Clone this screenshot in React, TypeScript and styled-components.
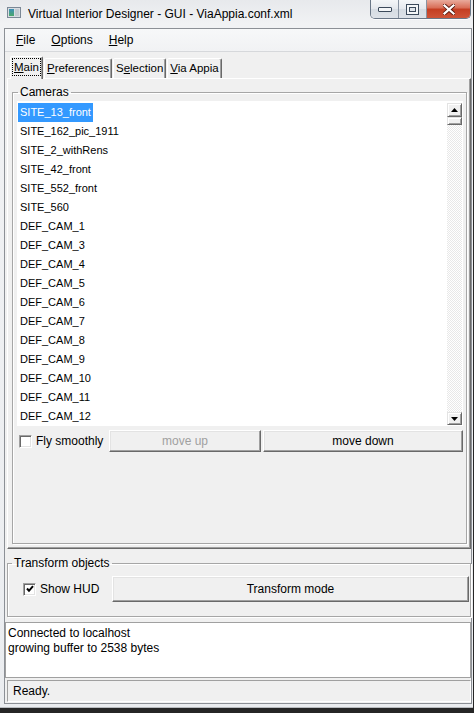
import React from "react";
import styled, { createGlobalStyle } from "styled-components";

const Global = createGlobalStyle`
  html, body { margin: 0; padding: 0; background: #262626; }
  body { width: 474px; height: 713px; overflow: hidden; font-family: "Liberation Sans", Arial, sans-serif; }
  #root { width: 474px; height: 713px; }
  * { box-sizing: border-box; }
`;

const Window = styled.div`
  width: 473px;
  height: 708px;
  display: flex;
  flex-direction: column;
  background: linear-gradient(180deg, #e7e9ec 0px, #f1f2f4 24px, #ebedf0 100%);
  border-bottom: 1px solid #b9bcc0;
`;

const TitleBar = styled.div`
  height: 28px;
  flex: none;
  display: flex;
  align-items: flex-start;
`;

const AppIcon = styled.svg`
  margin: 7px 0 0 7px;
  flex: none;
`;

const TitleText = styled.div`
  margin: 7px 0 0 7px;
  font-size: 12px;
  line-height: 15px;
  color: #000;
  white-space: nowrap;
`;

const Caption = styled.div`
  margin-left: auto;
  margin-right: 2px;
  display: flex;
  height: 19px;
  border: 1px solid #6a7787;
  border-top: none;
  border-radius: 0 0 5px 5px;
  overflow: hidden;
  box-shadow: 0 1px 0 rgba(255, 255, 255, 0.8);
`;

const CapBtn = styled.div`
  width: 28px;
  height: 100%;
  display: flex;
  align-items: center;
  justify-content: center;
  background: linear-gradient(180deg, #f4f6f8 0%, #e4e8ed 50%, #d6dce3 51%, #dde2e8 100%);
  border-right: 1px solid #8893a1;
`;

const CloseBtn = styled.div`
  width: 43px;
  height: 100%;
  display: flex;
  align-items: center;
  justify-content: center;
  background: linear-gradient(180deg, #e9ab9c 0%, #d86c55 45%, #c43e22 50%, #cf5438 100%);
`;

const Client = styled.div`
  flex: 1;
  margin: 0 1px 3px 4px;
  border: 1px solid #8c9096;
  background: #f0f0f0;
  display: flex;
  flex-direction: column;
  font-size: 12px;
  color: #000;
`;

const MenuBar = styled.div`
  height: 23px;
  flex: none;
  display: flex;
  align-items: center;
  padding-left: 3px;
  background: linear-gradient(180deg, #f7f8f9, #f1f2f4);
  border-bottom: 1px solid #d6d8db;
`;

const MenuItem = styled.span`
  padding: 0 8px;
  font-size: 12px;
  line-height: 15px;
`;

const Central = styled.div`
  flex: 1;
  display: flex;
  flex-direction: column;
  padding: 4px 0 0 2px;
`;

const TabWidget = styled.div`
  flex: 1;
  display: flex;
  flex-direction: column;
`;

const TabBar = styled.div`
  height: 22px;
  flex: none;
  display: flex;
  align-items: flex-end;
  gap: 1px;
  padding-left: 3px;
  position: relative;
  z-index: 1;
`;

const Tab = styled.div<{ $active?: boolean }>`
  height: ${(p) => (p.$active ? 23 : 20)}px;
  margin-bottom: ${(p) => (p.$active ? -1 : 0)}px;
  padding: ${(p) => (p.$active ? "2px 2px 0" : "1px 2px 0")};
  font-size: 11.5px;
  line-height: 16px;
  background: #f0f0f0;
  border: 1px solid;
  border-bottom: none;
  border-color: #ffffff #696969 transparent #ffffff;
  box-shadow: inset -1px 0 0 #a0a0a0;
  border-radius: 2px 2px 0 0;
  white-space: nowrap;
`;

const FocusLabel = styled.span`
  display: inline-block;
  outline: 1px dotted #000;
  outline-offset: 0;
  padding: 0 1px;
`;

const TabPane = styled.div`
  flex: 1;
  display: flex;
  flex-direction: column;
  border: 1px solid;
  border-color: #ffffff #696969 #696969 #ffffff;
  box-shadow: inset -1px -1px 0 #a0a0a0;
  padding: 7px 3px 4px 4px;
`;

const Group = styled.fieldset<{ $grow?: boolean; $top?: number }>`
  margin: ${(p) => p.$top ?? 0}px 0 0;
  min-width: 0;
  flex: ${(p) => (p.$grow ? 1 : "none")};
  display: flex;
  flex-direction: column;
  border: 1px solid #a6a6a6;
  box-shadow: 1px 1px 0 #ffffff, inset 1px 1px 0 #ffffff;
  padding: 0 3px 0 4px;
`;

const GroupTitle = styled.legend<{ $indent: number }>`
  margin-left: ${(p) => p.$indent}px;
  padding: 0 2px;
  font-size: 12px;
  line-height: 13px;
`;

const ListBox = styled.div`
  margin-top: 2px;
  height: 325px;
  flex: none;
  display: flex;
  background: #ffffff;
`;

const Items = styled.div`
  flex: 1;
  padding: 2px 0 0 1px;
  overflow: hidden;
`;

const Row = styled.div`
  height: 19px;
  display: flex;
  align-items: stretch;
`;

const ItemLabel = styled.span<{ $selected?: boolean }>`
  padding: 0 2px;
  font-size: 11px;
  line-height: 19px;
  color: ${(p) => (p.$selected ? "#ffffff" : "#000000")};
  background: ${(p) => (p.$selected ? "#3399ff" : "transparent")};
  white-space: nowrap;
`;

const ScrollBar = styled.div`
  width: 15px;
  flex: none;
  margin: 2px 1px 1px 0;
  display: flex;
  flex-direction: column;
`;

const Raised = styled.div<{ $h: number }>`
  height: ${(p) => p.$h}px;
  flex: none;
  display: flex;
  align-items: center;
  justify-content: center;
  background: #f0f0f0;
  border: 1px solid;
  border-color: #e3e3e3 #696969 #696969 #e3e3e3;
  box-shadow: inset 1px 1px 0 #ffffff, inset -1px -1px 0 #a0a0a0;
`;

const Track = styled.div`
  flex: 1;
  background: repeating-conic-gradient(#ffffff 0 25%, #e8e8e8 0 50%) 0 0 / 2px 2px;
`;

const ControlRow = styled.div`
  margin-top: 4px;
  height: 22px;
  display: flex;
  align-items: center;
  gap: 2px;
`;

const CheckLabel = styled.label<{ $width: number; $pad: number }>`
  width: ${(p) => p.$width}px;
  flex: none;
  padding-left: ${(p) => p.$pad}px;
  display: flex;
  align-items: center;
  gap: 4px;
  font-size: 12px;
  white-space: nowrap;
`;

const CheckBox = styled.span`
  width: 13px;
  height: 13px;
  flex: none;
  display: inline-flex;
  align-items: center;
  justify-content: center;
  background: #ffffff;
  border: 1px solid;
  border-color: #a0a0a0 #ffffff #ffffff #a0a0a0;
  box-shadow: inset 1px 1px 0 #696969, inset -1px -1px 0 #e3e3e3;
`;

const PushButton = styled.button<{ $w?: number; $h: number; $disabled?: boolean }>`
  flex: ${(p) => (p.$w ? "none" : 1)};
  width: ${(p) => (p.$w ? `${p.$w}px` : "auto")};
  height: ${(p) => p.$h}px;
  margin: 0;
  padding: 0;
  font-family: "Liberation Sans", Arial, sans-serif;
  font-size: 12px;
  color: ${(p) => (p.$disabled ? "#a0a0a0" : "#000000")};
  background: #f0f0f0;
  border: 1px solid;
  border-color: #ffffff #696969 #696969 #ffffff;
  box-shadow: inset -1px -1px 0 #a0a0a0, inset 1px 1px 0 #e3e3e3;
  border-radius: 0;
`;

const TransformRow = styled.div`
  margin-top: 6px;
  margin-bottom: 14px;
  height: 26px;
  display: flex;
  align-items: center;
  margin-right: -2px;
`;

const LogBox = styled.div`
  margin: 5px 0 0 -2px;
  height: 56px;
  flex: none;
  background: #ffffff;
  border: 1px solid #a0a0a0;
  padding: 3px 2px;
  font-size: 12px;
  line-height: 15px;
`;

const StatusBar = styled.div`
  height: 22px;
  flex: none;
  margin: 2px 0 1px 2px;
  border: 1px solid;
  border-color: #a0a0a0 #ffffff #ffffff #a0a0a0;
  display: flex;
  align-items: center;
  padding-left: 5px;
  font-size: 12px;
`;

const cameras = [
  "SITE_13_front",
  "SITE_162_pic_1911",
  "SITE_2_withRens",
  "SITE_42_front",
  "SITE_552_front",
  "SITE_560",
  "DEF_CAM_1",
  "DEF_CAM_3",
  "DEF_CAM_4",
  "DEF_CAM_5",
  "DEF_CAM_6",
  "DEF_CAM_7",
  "DEF_CAM_8",
  "DEF_CAM_9",
  "DEF_CAM_10",
  "DEF_CAM_11",
  "DEF_CAM_12",
];

const Arrow = ({ up }: { up?: boolean }) => (
  <svg width="7" height="4" viewBox="0 0 7 4">
    <polygon points={up ? "0,4 7,4 3.5,0" : "0,0 7,0 3.5,4"} fill="#000" />
  </svg>
);

export default function App() {
  return (
    <>
      <Global />
      <Window>
        <TitleBar>
          <AppIcon width="14" height="11" viewBox="0 0 14 11">
            <defs>
              <linearGradient id="ig" x1="0" y1="0" x2="0" y2="1">
                <stop offset="0" stopColor="#3d8fb8" />
                <stop offset="1" stopColor="#4aa86a" />
              </linearGradient>
            </defs>
            <rect x="0.5" y="0.5" width="13" height="10" fill="#d8dde2" stroke="#7b8896" />
            <rect x="2" y="2" width="5" height="7" fill="url(#ig)" />
            <rect x="8" y="2" width="4" height="7" fill="#c3cad1" />
          </AppIcon>
          <TitleText>Virtual Interior Designer - GUI - ViaAppia.conf.xml</TitleText>
          <Caption>
            <CapBtn>
              <svg width="14" height="6" viewBox="0 0 14 6">
                <rect x="0.5" y="1.5" width="13" height="4" fill="#f4f6f8" stroke="#3c4a5b" rx="0.5" />
              </svg>
            </CapBtn>
            <CapBtn>
              <svg width="13" height="11" viewBox="0 0 13 11">
                <rect x="0.5" y="0.5" width="12" height="10" fill="#f4f6f8" stroke="#3c4a5b" />
                <rect x="3.5" y="3.5" width="6" height="4" fill="#dfe4ea" stroke="#3c4a5b" />
              </svg>
            </CapBtn>
            <CloseBtn>
              <svg width="12" height="11" viewBox="0 0 12 11">
                <path d="M1.5 1.5 L10.5 9.5 M10.5 1.5 L1.5 9.5" stroke="#5a1b10" strokeWidth="4" strokeLinecap="square" />
                <path d="M1.5 1.5 L10.5 9.5 M10.5 1.5 L1.5 9.5" stroke="#ffffff" strokeWidth="2.2" strokeLinecap="square" />
              </svg>
            </CloseBtn>
          </Caption>
        </TitleBar>

        <Client>
          <MenuBar>
            <MenuItem><u>F</u>ile</MenuItem>
            <MenuItem><u>O</u>ptions</MenuItem>
            <MenuItem><u>H</u>elp</MenuItem>
          </MenuBar>

          <Central>
            <TabWidget>
              <TabBar>
                <Tab $active>
                  <FocusLabel><u>M</u>ain</FocusLabel>
                </Tab>
                <Tab><u>P</u>references</Tab>
                <Tab>S<u>e</u>lection</Tab>
                <Tab><u>V</u>ia Appia</Tab>
              </TabBar>
              <TabPane>
                <Group $grow>
                  <GroupTitle $indent={1}>Cameras</GroupTitle>
                  <ListBox>
                    <Items>
                      {cameras.map((c, i) => (
                        <Row key={c}>
                          <ItemLabel $selected={i === 0}>{c}</ItemLabel>
                        </Row>
                      ))}
                    </Items>
                    <ScrollBar>
                      <Raised $h={14}><Arrow up /></Raised>
                      <Raised $h={8} />
                      <Track />
                      <Raised $h={13}><Arrow /></Raised>
                    </ScrollBar>
                  </ListBox>
                  <ControlRow>
                    <CheckLabel $width={90} $pad={2}>
                      <CheckBox />
                      Fly smoothly
                    </CheckLabel>
                    <PushButton $w={152} $h={22} $disabled>move up</PushButton>
                    <PushButton $h={22}>move down</PushButton>
                  </ControlRow>
                </Group>
              </TabPane>
            </TabWidget>

            <Group $top={8}>
              <GroupTitle $indent={0}>Transform objects</GroupTitle>
              <TransformRow>
                <CheckLabel $width={100} $pad={11}>
                  <CheckBox>
                    <svg width="8" height="8" viewBox="0 0 8 8">
                      <polyline points="1,3.5 3,5.8 7,1.2" fill="none" stroke="#000" strokeWidth="2" />
                    </svg>
                  </CheckBox>
                  Show HUD
                </CheckLabel>
                <PushButton $h={26}>Transform mode</PushButton>
              </TransformRow>
            </Group>

            <LogBox>
              Connected to localhost
              <br />
              growing buffer to 2538 bytes
            </LogBox>
          </Central>

          <StatusBar>Ready.</StatusBar>
        </Client>
      </Window>
    </>
  );
}
